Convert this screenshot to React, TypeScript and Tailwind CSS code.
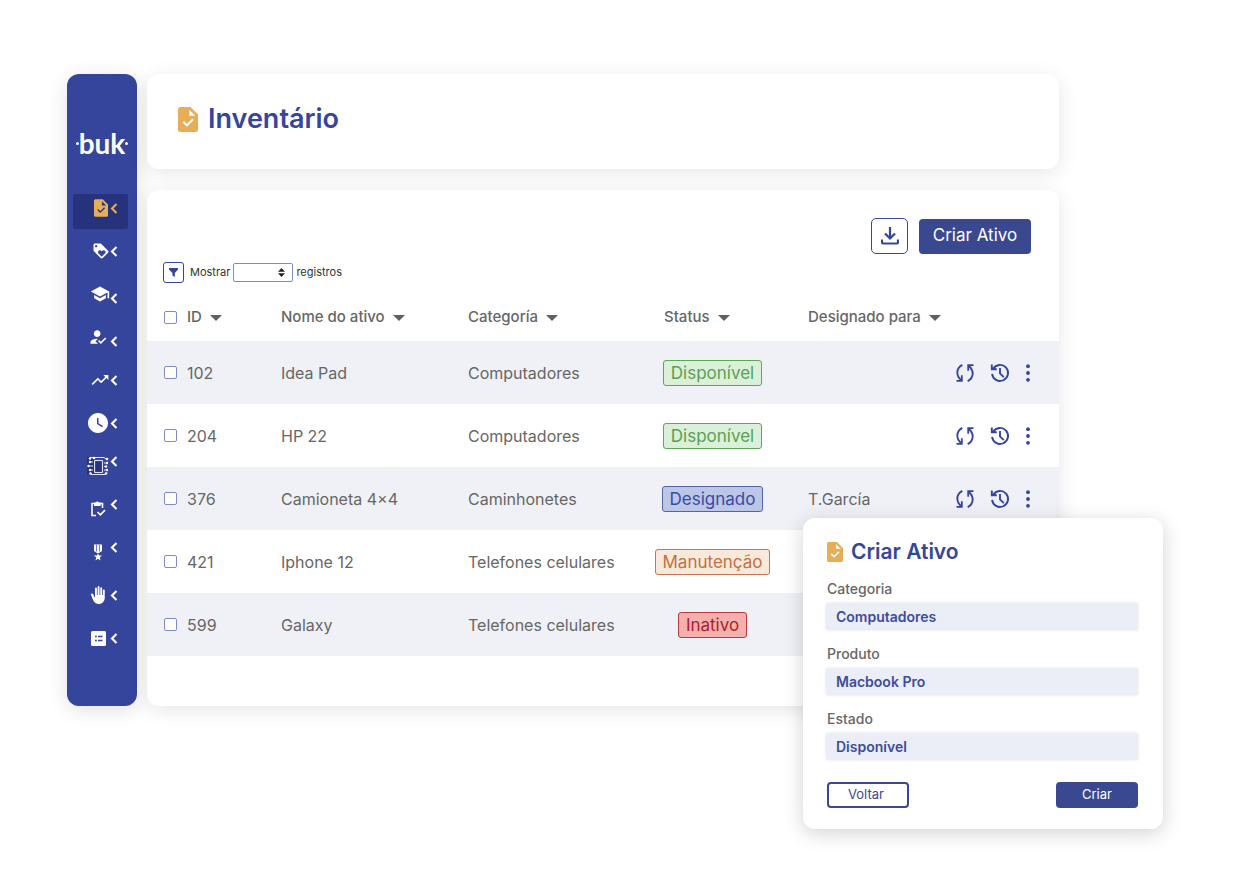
import type { FC, ReactNode } from "react";
import {
  MdBackHand,
  MdHowToReg,
  MdLoyalty,
  MdSchool,
  MdTrendingUp,
  MdWatchLater,
} from "react-icons/md";

const FileCheckIcon: FC<{ className?: string; check?: string }> = ({
  className,
  check = "white",
}) => (
  <svg viewBox="0 0 20 25" fill="none" className={className}>
    <path
      d="M2 0h10.5L20 7.5V22.8a2.2 2.2 0 0 1-2.2 2.2H2.2A2.2 2.2 0 0 1 0 22.8V2.2A2.2 2.2 0 0 1 2 0Z"
      fill="#e8ad57"
    />
    <path d="M11.3 2.8v6h6Z" fill={check} />
    <path d="m5.3 14.8 3.6 3.6 6.2-6.2" stroke={check} strokeWidth="2" />
  </svg>
);

const CircuitIcon = () => (
  <svg viewBox="0 0 22 20" fill="none" className="w-[22px] h-5">
    <path d="M0 1h7v18H0Z" fill="#26327c" />
    <path
      d="M7.5 4.5h8v12h-8zM3 1.5h14l3 2M4 18.5h14l2-2M1 10h5M3 6h3M3 14h3M17 7h4M17 10.5h3M17 14h4"
      stroke="#dfe2f2"
      strokeWidth="1"
    />
    <path d="M9 5.500h5v10H9z" fill="#26327c" />
    <g fill="white">
      <circle cx="3" cy="2.5" r="1.3" />
      <circle cx="7" cy="2" r="1.3" />
      <circle cx="3" cy="6" r="1.2" />
      <circle cx="1.5" cy="10" r="1.2" />
      <circle cx="3" cy="14" r="1.2" />
      <circle cx="3.5" cy="17.5" r="1.3" />
      <circle cx="20" cy="3" r="1.3" />
      <circle cx="20" cy="7" r="1.2" />
      <circle cx="19" cy="10.5" r="1.2" />
      <circle cx="20" cy="14" r="1.2" />
      <circle cx="19" cy="17.5" r="1.2" />
    </g>
  </svg>
);

const ClipboardIcon = () => (
  <svg viewBox="0 0 16 18" fill="none" className="w-4 h-[18px]">
    <path
      d="M6 15.5H2v-12h10.5V8M7.5 12l2.8 2.8 4.7-4.7"
      stroke="white"
      strokeWidth="1.6"
    />
    <path d="M4 2.5h1.8a1.6 1.6 0 0 1 3 0h1.9V6H4Z" fill="white" />
  </svg>
);

const MedalIcon = () => (
  <svg viewBox="0 0 10 17" fill="white" className="w-[10px] h-[17px]">
    <path d="M1 .5h8V7L6 9H4L1 7Z" />
    <path d="M3.5 1v6.5M6.5 1v6.5" stroke="#35459c" strokeWidth=".7" />
    <path d="m5 9 1 2.6h3l-2.3 1.8.9 3L5 14.7l-2.6 1.7.9-3L1 11.6h3Z" />
  </svg>
);

const ListIcon = () => (
  <svg viewBox="0 0 15 15" className="w-[15px] h-[15px]">
    <rect width="15" height="15" rx="1.5" fill="white" />
    <path
      d="M4 5.500h1.800M7 5.500h4.500M4 9.500h1.800M7 9.500h4.500"
      stroke="#35459c"
      strokeWidth="1.3"
    />
  </svg>
);

const ChevronIcon: FC<{ className?: string }> = ({ className }) => (
  <svg viewBox="0 0 8 11" fill="none" className={`w-2 h-[11px] ${className}`}>
    <path d="M6.500 1 2 5.500l4.500 4.500" stroke="currentColor" strokeWidth="2.100" />
  </svg>
);

const SyncIcon = () => (
  <svg viewBox="0 0 20 20" fill="none" className="w-5 h-5">
    <path
      d="M7.300 1.800C.8 5.500 1 12.500 6 17M12.700 18.200C19.200 14.500 19 7.500 14 3"
      stroke="currentColor"
      strokeWidth="1.900"
    />
    <path
      d="M1.500 17.800h5.300v-5.500M18.500 2.200h-5.300v5.500"
      stroke="currentColor"
      strokeWidth="1.800"
    />
  </svg>
);

const HistoryIcon = () => (
  <svg viewBox="0 0 20 20" fill="none" className="w-5 h-5">
    <path
      d="M3.200 5.800A8 8 0 1 1 2.100 10.800M1.800 1.500v4.700h5M10 5v5.300l3.800 3.800"
      stroke="currentColor"
      strokeWidth="1.900"
    />
  </svg>
);

const DotsIcon = () => (
  <svg viewBox="0 0 4 18" fill="currentColor" className="w-1 h-[18px]">
    <circle cx="2" cy="2.2" r="1.9" />
    <circle cx="2" cy="9" r="1.9" />
    <circle cx="2" cy="15.8" r="1.9" />
  </svg>
);

interface NavItem {
  label: string;
  icon: ReactNode;
  chevron: string;
}

const navItems: NavItem[] = [
  {
    label: "Inventário",
    icon: <FileCheckIcon className="w-[14px] h-[18px] ml-[6px]" check="#26327c" />,
    chevron: "self-center",
  },
  {
    label: "Benefícios",
    icon: <MdLoyalty className="w-[18px] h-[18px] ml-[6px]" />,
    chevron: "self-center",
  },
  { label: "Capacitação", icon: <MdSchool className="w-5 h-5 ml-1" />, chevron: "self-end" },
  { label: "Seleção", icon: <MdHowToReg className="w-5 h-5" />, chevron: "self-end" },
  { label: "Desempenho", icon: <MdTrendingUp className="w-5 h-5 ml-1" />, chevron: "self-center" },
  { label: "Horários", icon: <MdWatchLater className="w-6 h-6" />, chevron: "self-center" },
  { label: "Processos", icon: <CircuitIcon />, chevron: "self-start" },
  { label: "Tarefas", icon: <ClipboardIcon />, chevron: "self-start" },
  { label: "Reconhecimento", icon: <MedalIcon />, chevron: "self-start" },
  { label: "Solicitações", icon: <MdBackHand className="w-[18px] h-[18px]" />, chevron: "self-center" },
  { label: "Pesquisas", icon: <ListIcon />, chevron: "self-center" },
];

const statusStyles = {
  Disponível: "bg-[#daf0d9] border-[#5fa55a] text-[#5a9f56]",
  Designado: "bg-[#bcc6e6] border-[#5363ad] text-[#394ba3]",
  Manutenção: "bg-[#f8e9dc] border-[#c87747] text-[#c2703f]",
  Inativo: "bg-[#f3b0af] border-[#c0393b] text-[#ac2127]",
};

interface Asset {
  id: number;
  name: string;
  category: string;
  status: keyof typeof statusStyles;
  assignee?: string;
}

const assets: Asset[] = [
  { id: 102, name: "Idea Pad", category: "Computadores", status: "Disponível" },
  { id: 204, name: "HP 22", category: "Computadores", status: "Disponível" },
  {
    id: 376,
    name: "Camioneta 4×4",
    category: "Caminhonetes",
    status: "Designado",
    assignee: "T.García",
  },
  { id: 421, name: "Iphone 12", category: "Telefones celulares", status: "Manutenção" },
  { id: 599, name: "Galaxy", category: "Telefones celulares", status: "Inativo" },
];

const fields = [
  { id: "categoria", label: "Categoria", value: "Computadores" },
  { id: "produto", label: "Produto", value: "Macbook Pro" },
  { id: "estado", label: "Estado", value: "Disponível" },
];

const Checkbox: FC<{ label: string }> = ({ label }) => (
  <input
    type="checkbox"
    aria-label={label}
    className="block appearance-none w-[13px] h-[13px] rounded-xs border border-[#7f8bc6] bg-white checked:bg-[#35459c]"
  />
);

const SortHeader: FC<{ children: ReactNode }> = ({ children }) => (
  <button type="button" className="flex items-center gap-2 whitespace-nowrap">
    {children}
    <svg viewBox="0 0 12 6" className="w-3 h-[6px]">
      <path d="M0 0h12L6 6Z" fill="#606060" />
    </svg>
  </button>
);

const Sidebar = () => (
  <aside className="w-[70px] shrink-0 rounded-xl bg-[#35459c] text-white shadow-[0_4px_20px_rgba(0,0,0,0.12)]">
    <div className="flex items-center justify-center pt-12 h-[90px] font-['Lato',sans-serif] text-[28px] leading-9 font-bold">
      <span className="w-[3px] h-[3px] rounded-full bg-white" />
      <span>buk</span>
      <span className="w-[3px] h-[3px] rounded-full bg-white" />
    </div>
    <nav className="flex flex-col gap-2 pt-[30px] pl-[6px] pr-[9px]">
      {navItems.map((item, i) => (
        <a
          key={item.label}
          href="#"
          aria-label={item.label}
          className={
            i === 0
              ? "flex items-start justify-end h-[35px] pt-1 pr-[10px] rounded-xs bg-[#26327c] text-[#e8ad57]"
              : "flex items-start justify-end h-[35px] pt-1 pr-[10px]"
          }
        >
          <span className="flex h-5">
            <span className="flex items-center justify-center w-6">{item.icon}</span>
            <ChevronIcon className={item.chevron} />
          </span>
        </a>
      ))}
    </nav>
  </aside>
);

const AssetTable = () => (
  <table className="w-full table-fixed text-left text-[#666666]">
    <colgroup>
      <col className="w-10" />
      <col className="w-[94px]" />
      <col className="w-[187px]" />
      <col className="w-[186px]" />
      <col className="w-[154px]" />
      <col className="w-[139px]" />
      <col className="w-[112px]" />
    </colgroup>
    <thead>
      <tr className="h-[47px] text-[15px] [&>th]:font-medium">
        <th className="pl-[17px]">
          <Checkbox label="Selecionar todos" />
        </th>
        <th>
          <SortHeader>ID</SortHeader>
        </th>
        <th>
          <SortHeader>Nome do ativo</SortHeader>
        </th>
        <th>
          <SortHeader>Categoría</SortHeader>
        </th>
        <th className="pl-[10px]">
          <SortHeader>Status</SortHeader>
        </th>
        <th>
          <SortHeader>Designado para</SortHeader>
        </th>
        <th />
      </tr>
    </thead>
    <tbody>
      {assets.map((asset) => (
        <tr key={asset.id} className="h-[63px] text-base odd:bg-[#f0f1f7]">
          <td className="pl-[17px]">
            <Checkbox label={`Selecionar ${asset.name}`} />
          </td>
          <td>{asset.id}</td>
          <td>{asset.name}</td>
          <td>{asset.category}</td>
          <td>
            <div className="flex justify-center w-[117px]">
              <span
                className={`px-[7px] text-[17px] leading-6 rounded-[3px] border ${statusStyles[asset.status]}`}
              >
                {asset.status}
              </span>
            </div>
          </td>
          <td>{asset.assignee}</td>
          <td className="pr-[29px]">
            <div className="flex items-center justify-end text-[#35459c]">
              <button type="button" aria-label="Trocar" className="mr-[15px]">
                <SyncIcon />
              </button>
              <button type="button" aria-label="Histórico" className="mr-4">
                <HistoryIcon />
              </button>
              <button type="button" aria-label="Mais opções">
                <DotsIcon />
              </button>
            </div>
          </td>
        </tr>
      ))}
    </tbody>
  </table>
);

const CreateAssetDialog = () => (
  <form
    aria-labelledby="create-title"
    className="absolute -right-[104px] -bottom-[123px] w-[360px] rounded-xl bg-white pt-5 pb-[21px] pl-[23px] pr-[25px] shadow-[0_4px_20px_rgba(0,0,0,0.18)]"
  >
    <h2
      id="create-title"
      className="flex items-center gap-2 pl-[1px] mb-[13px] text-[21px] leading-7 font-semibold text-[#35459c]"
    >
      <FileCheckIcon className="w-4 h-5" />
      Criar Ativo
    </h2>
    {fields.map((field) => (
      <div key={field.id} className="mb-[14px]">
        <label
          htmlFor={field.id}
          className="block pl-[1px] mb-1 text-[14px] leading-5 font-medium text-[#666666]"
        >
          {field.label}
        </label>
        <input
          id={field.id}
          type="text"
          defaultValue={field.value}
          className="block w-full h-[27px] px-[10px] rounded-xs bg-[#ebeef6] text-[14px] font-semibold text-[#3d4c9c] shadow-[0_0_3px_rgba(0,0,0,0.12)]"
        />
      </div>
    ))}
    <div className="flex justify-between pl-[1px] pt-2 text-[13px]">
      <button
        type="button"
        className="w-[82px] h-[26px] rounded-sm border-2 border-[#39488f] pr-1 text-[#39488f]"
      >
        Voltar
      </button>
      <button type="button" className="w-[82px] h-[26px] rounded-sm bg-[#39488f] text-white">
        Criar
      </button>
    </div>
  </form>
);

const App = () => (
  <div className="min-h-screen bg-white pt-[74px] pb-[188px] pl-[67px] pr-[175px] font-['Inter',sans-serif]">
    <div className="flex gap-[10px]">
      <Sidebar />
      <main className="flex flex-col flex-1 gap-[21px]">
        <header className="flex items-center gap-[10px] h-[95px] pl-[31px] pb-[5px] rounded-xl bg-white shadow-[0_4px_20px_rgba(0,0,0,0.1)]">
          <FileCheckIcon className="w-5 h-[25px]" />
          <h1 className="text-[27px] font-semibold text-[#35459c]">Inventário</h1>
        </header>
        <section className="relative pt-7 pb-[50px] rounded-xl bg-white shadow-[0_4px_20px_rgba(0,0,0,0.1)]">
          <div className="flex items-center justify-end gap-[11px] pr-7">
            <button
              type="button"
              aria-label="Baixar"
              className="flex items-center justify-center w-[37px] h-[36px] rounded-[5px] border border-[#39488f] text-[#35459c]"
            >
              <svg viewBox="0 0 18 18" fill="none" className="w-[18px] h-[18px]">
                <path
                  d="M9 0v11M4 6.500l5 5 5-5M1 12.500v2.700q0 1.300 1.300 1.300h13.400q1.300 0 1.300-1.300v-2.700"
                  stroke="currentColor"
                  strokeWidth="2.200"
                />
              </svg>
            </button>
            <button
              type="button"
              className="w-[112px] h-[35px] rounded-sm bg-[#39488f] text-[17px] text-white"
            >
              Criar Ativo
            </button>
          </div>
          <div className="flex items-center pt-2 pb-[11px] pl-4 text-[11px] text-[#333333]">
            <button
              type="button"
              aria-label="Filtrar"
              className="flex items-center justify-center w-[21px] h-[21px] mr-[6px] rounded-[3px] border border-[#35459c]"
            >
              <svg viewBox="0 0 9 9" className="w-[9px] h-[9px]">
                <path d="M0 0h9v1.500L5.800 5v4L3.400 7.500V5L0 1.500Z" fill="#35459c" />
              </svg>
            </button>
            <label htmlFor="page-size">Mostrar</label>
            <div className="relative mx-[3px]">
              <select
                id="page-size"
                className="block appearance-none w-[60px] h-[19px] rounded-xs border border-[#7f8bc6] bg-white"
              >
                <option value="" />
                <option>10</option>
                <option>25</option>
              </select>
              <svg
                viewBox="0 0 7 9"
                className="absolute right-2 top-[5px] w-[7px] h-[9px] pointer-events-none"
              >
                <path d="M3.500 0 7 3.700H0ZM3.500 9 0 5.300h7Z" fill="#222222" />
              </svg>
            </div>
            <span>registros</span>
          </div>
          <AssetTable />
          <CreateAssetDialog />
        </section>
      </main>
    </div>
  </div>
);

export default App;
